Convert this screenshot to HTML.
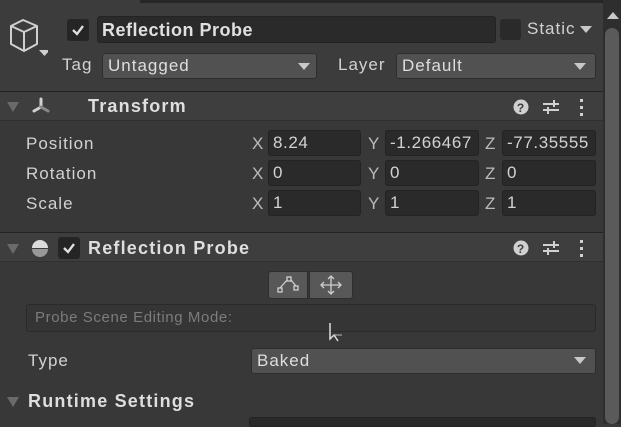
<!DOCTYPE html>
<html><head><meta charset="utf-8"><style>
*{margin:0;padding:0;box-sizing:border-box}
body{width:621px;height:424px;overflow:hidden;background:#383838;font-family:"Liberation Sans",sans-serif;color:#d2d2d2;font-size:17px;letter-spacing:1px;position:relative}
.a{position:absolute;white-space:nowrap}
.f{position:absolute;background:#2a2a2a;border:1px solid #232323;border-radius:3px;height:26px;line-height:24px;padding-left:4px;color:#d2d2d2;overflow:hidden;white-space:nowrap;letter-spacing:0.6px}
.dd{position:absolute;background:#515151;border:1px solid #2e2e2e;border-radius:3px;height:26px;line-height:24px;padding-left:5px;color:#dedede}
.tri{position:absolute;width:0;height:0;border-left:6px solid transparent;border-right:6px solid transparent;border-top:7px solid #c8c8c8}
.hdr{position:absolute;left:0;width:603px;height:30px;background:#3e3e3e;border-top:1px solid #232323;border-bottom:1px solid #303030}
.b{font-weight:bold;font-size:18px;letter-spacing:1.2px}
.cb{position:absolute;width:22px;height:22px;background:#252525;border-radius:3px}
.ft{position:absolute;width:0;height:0;border-left:6px solid transparent;border-right:6px solid transparent;border-top:10px solid #6a6a6a}
</style></head><body>
<div class="a" style="left:0;top:0;width:603px;height:92px;background:#3c3c3c"></div>
<div class="a" style="left:140px;top:0;width:463px;height:3px;background:#262626"></div>
<div class="a" style="left:603px;top:0;width:18px;height:424px;background:#2e2e2e"></div>
<div class="a" style="left:605px;top:28px;width:14px;height:396px;background:#5a5a5a;border-radius:7px"></div>
<div class="a" style="left:607px;top:12px;width:0;height:0;border-left:6px solid transparent;border-right:6px solid transparent;border-bottom:7px solid #c8c8c8"></div>
<svg class="a" style="left:8px;top:18px" width="40" height="40" viewBox="0 0 40 40"><g fill="none" stroke="#d0d0d0" stroke-width="2" stroke-linejoin="round"><path d="M3 8 L15 2 L29 8 L29 26 L16 33 L3 26 Z"/><path d="M3 8 L16 14 L29 8 M16 14 L16 33"/></g><path d="M31 32 L42 32 L36.5 38Z" fill="#d0d0d0"/></svg>
<div class="cb" style="left:67px;top:19px"></div>
<svg class="a" style="left:70px;top:22px" width="16" height="16"><path d="M3 8 L7 12 L13 4" stroke="#e0e0e0" stroke-width="2.3" fill="none"/></svg>
<div class="f b" style="left:97px;top:16px;width:399px;height:27px;line-height:27px;font-size:18px;letter-spacing:0.5px;color:#e0e0e0">Reflection Probe</div>
<div class="cb" style="left:500px;top:19px;width:21px;height:21px;background:#2a2a2a"></div>
<div class="a" style="left:527px;top:19px;color:#d2d2d2">Static</div>
<div class="tri" style="left:580px;top:26px"></div>
<div class="a" style="left:62px;top:55px">Tag</div>
<div class="dd" style="left:102px;top:53px;width:215px">Untagged</div>
<div class="tri" style="left:298px;top:63px"></div>
<div class="a" style="left:338px;top:55px">Layer</div>
<div class="dd" style="left:396px;top:53px;width:200px">Default</div>
<div class="tri" style="left:574px;top:63px"></div>
<div class="hdr" style="top:91px"></div>
<div class="ft" style="left:7px;top:102px"></div>
<svg class="a" style="left:30px;top:96px" width="22" height="20"><g stroke="#d0d0d0" stroke-width="3" stroke-linecap="round"><path d="M11 3 L11 10"/><path d="M11 11 L4 15"/><path d="M11 11 L18 15" stroke="#888"/></g></svg>
<div class="a b" style="left:88px;top:96px;color:#dedede">Transform</div>
<svg class="a" style="left:512px;top:98px" width="80" height="20"><circle cx="9" cy="9" r="7.5" fill="#d0d0d0"/><text x="9" y="14" font-size="12" font-weight="bold" text-anchor="middle" fill="#3e3e3e" font-family="Liberation Sans">?</text><g stroke="#d0d0d0" stroke-width="2"><path d="M31 6 L47 6 M31 12 L47 12 M42 2 L42 9 M36 9 L36 16"/></g><g fill="#d0d0d0"><rect x="68" y="1" width="3" height="3"/><rect x="68" y="8" width="3" height="3"/><rect x="68" y="15" width="3" height="3"/></g></svg>
<div class="a" style="left:26px;top:134px">Position</div>
<div class="a" style="left:26px;top:164px">Rotation</div>
<div class="a" style="left:26px;top:194px">Scale</div>
<div class="a" style="left:252px;top:134px;color:#bbb">X</div><div class="f" style="left:268px;top:130px;width:93px">8.24</div>
<div class="a" style="left:368px;top:134px;color:#bbb">Y</div><div class="f" style="left:385px;top:130px;width:94px">-1.266467</div>
<div class="a" style="left:485px;top:134px;color:#bbb">Z</div><div class="f" style="left:502px;top:130px;width:94px">-77.35555</div>
<div class="a" style="left:252px;top:164px;color:#bbb">X</div><div class="f" style="left:268px;top:160px;width:93px">0</div>
<div class="a" style="left:368px;top:164px;color:#bbb">Y</div><div class="f" style="left:385px;top:160px;width:94px">0</div>
<div class="a" style="left:485px;top:164px;color:#bbb">Z</div><div class="f" style="left:502px;top:160px;width:94px">0</div>
<div class="a" style="left:252px;top:194px;color:#bbb">X</div><div class="f" style="left:268px;top:190px;width:93px">1</div>
<div class="a" style="left:368px;top:194px;color:#bbb">Y</div><div class="f" style="left:385px;top:190px;width:94px">1</div>
<div class="a" style="left:485px;top:194px;color:#bbb">Z</div><div class="f" style="left:502px;top:190px;width:94px">1</div>
<div class="hdr" style="top:232px"></div>
<div class="ft" style="left:7px;top:244px"></div>
<svg class="a" style="left:30px;top:238px" width="20" height="20"><path d="M2 10 A8 8 0 0 1 18 10Z" fill="#dcdcdc"/><path d="M2 11 A8 8 0 0 0 18 11Z" fill="#999"/></svg>
<div class="cb" style="left:58px;top:237px"></div>
<svg class="a" style="left:61px;top:240px" width="16" height="16"><path d="M3 8 L7 12 L13 4" stroke="#e0e0e0" stroke-width="2.3" fill="none"/></svg>
<div class="a b" style="left:88px;top:238px;color:#dedede">Reflection Probe</div>
<svg class="a" style="left:512px;top:239px" width="80" height="20"><circle cx="9" cy="9" r="7.5" fill="#d0d0d0"/><text x="9" y="14" font-size="12" font-weight="bold" text-anchor="middle" fill="#3e3e3e" font-family="Liberation Sans">?</text><g stroke="#d0d0d0" stroke-width="2"><path d="M31 6 L47 6 M31 12 L47 12 M42 2 L42 9 M36 9 L36 16"/></g><g fill="#d0d0d0"><rect x="68" y="1" width="3" height="3"/><rect x="68" y="8" width="3" height="3"/><rect x="68" y="15" width="3" height="3"/></g></svg>
<div class="a" style="left:268px;top:271px;width:40px;height:28px;background:#585858;border:1px solid #2e2e2e;border-radius:3px 0 0 3px"></div>
<div class="a" style="left:309px;top:271px;width:44px;height:28px;background:#585858;border:1px solid #2e2e2e;border-radius:0 3px 3px 0"></div>
<svg class="a" style="left:276px;top:275px" width="24" height="20"><g fill="none" stroke="#cfcfcf" stroke-width="1.3"><rect x="2" y="13" width="4" height="4"/><rect x="11" y="2" width="4" height="4"/><rect x="18" y="11" width="4" height="4"/><path d="M4 13 L11 5 M15 5 L20 11"/></g></svg>
<svg class="a" style="left:318px;top:274px" width="26" height="22"><g fill="none" stroke="#cfcfcf" stroke-width="1.3"><path d="M13 2 L13 20 M3 11 L23 11 M10 5 L13 2 L16 5 M10 17 L13 20 L16 17 M6 8 L3 11 L6 14 M20 8 L23 11 L20 14"/></g></svg>
<div class="a" style="left:26px;top:304px;width:570px;height:28px;background:#353535;border:1px solid #2a2a2a;border-radius:3px;color:#7c7c7c;font-size:15px;letter-spacing:0.6px;line-height:26px;padding-left:8px">Probe Scene Editing Mode:</div>
<svg class="a" style="left:328px;top:321px" width="16" height="22"><path d="M2 2 L2 18 L6 14 L10 20" fill="none" stroke="#ddd" stroke-width="1.5"/><path d="M5 14 L14 14" stroke="#bbb"/></svg>
<div class="a" style="left:28px;top:351px">Type</div>
<div class="dd" style="left:251px;top:348px;width:345px">Baked</div>
<div class="tri" style="left:574px;top:357px"></div>
<div class="ft" style="left:7px;top:397px"></div>
<div class="a b" style="left:28px;top:391px;color:#dedede">Runtime Settings</div>
<div class="a" style="left:249px;top:417px;width:347px;height:10px;background:#2a2a2a;border:1px solid #232323;border-radius:3px"></div>
</body></html>
